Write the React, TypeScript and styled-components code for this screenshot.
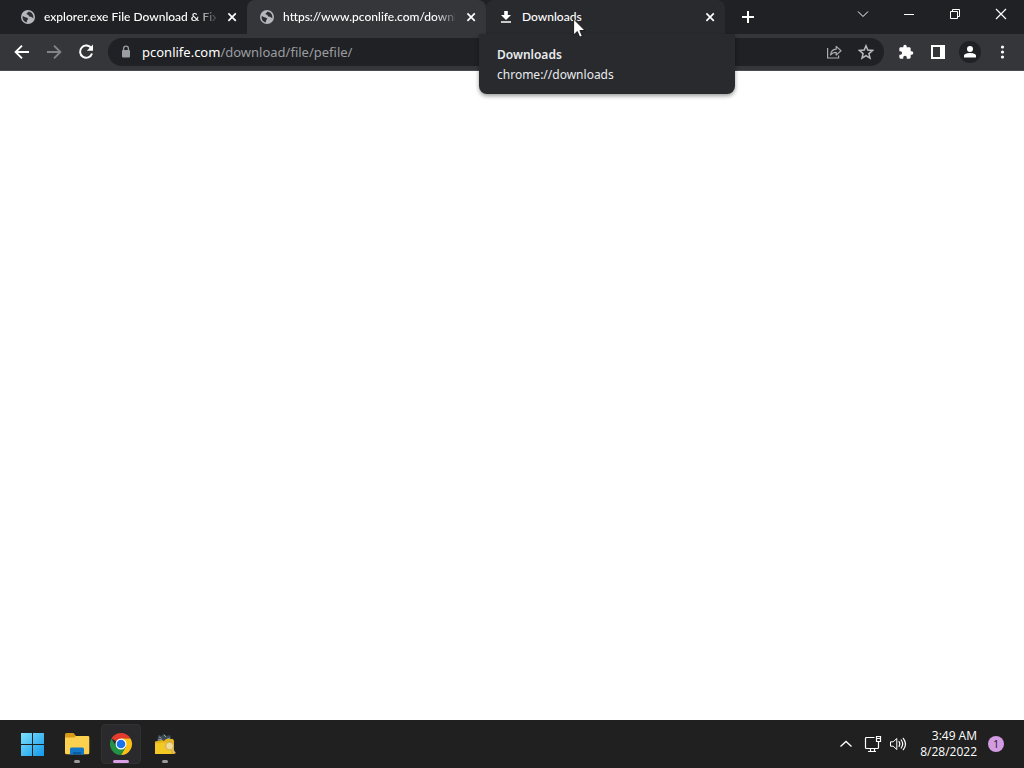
import React from "react";
import styled, { createGlobalStyle, css } from "styled-components";

const GlobalStyle = createGlobalStyle`
  * { box-sizing: border-box; }
  body {
    margin: 0;
    background: #ffffff;
    font-family: "Noto Sans", "Open Sans", sans-serif;
  }
`;

const Desktop = styled.div`
  display: flex;
  flex-direction: column;
  min-height: 100vh;
`;

const TabStrip = styled.header`
  display: flex;
  align-items: center;
  height: 34px;
  padding-left: 8px;
  background: #202124;
`;

const Tabs = styled.div`
  display: flex;
  flex: 0 1 717px;
  min-width: 0;
  height: 34px;
`;

type TabState = "idle" | "active" | "hover";

const tabFill = { idle: "#202124", active: "#35363a", hover: "#292a2d" };

const Tab = styled.div<{ $state: TabState }>`
  position: relative;
  display: flex;
  flex: 1 1 0;
  align-items: center;
  gap: 8px;
  min-width: 0;
  padding: 0 7px 0 12px;
  border-radius: 8px 8px 0 0;
  background: ${(p) => tabFill[p.$state]};
  color: #ffffff;
`;

const TabTitle = styled.span<{ $fade?: boolean }>`
  flex: 1;
  min-width: 0;
  overflow: hidden;
  font-family: Lato, "Open Sans", sans-serif;
  font-size: 12px;
  font-weight: 500;
  line-height: 18px;
  white-space: nowrap;
  ${(p) =>
    p.$fade &&
    css`
      mask-image: linear-gradient(to right, #000 calc(100% - 20px), rgba(0, 0, 0, 0.15));
    `}
`;

const IconButton = styled.button<{ $w: number; $h: number; $color?: string }>`
  display: flex;
  flex: none;
  align-items: center;
  justify-content: center;
  width: ${(p) => p.$w}px;
  height: ${(p) => p.$h}px;
  padding: 0;
  border: 0;
  background: transparent;
  color: ${(p) => p.$color ?? "#ffffff"};
`;

const NewTab = styled.div`
  padding-left: 14px;
`;

const WindowControls = styled.div`
  display: flex;
  align-self: flex-start;
  margin-left: auto;
`;

const Toolbar = styled.nav`
  display: flex;
  align-items: center;
  height: 37px;
  padding: 0 6px;
  border-bottom: 1px solid #4a4b4e;
  background: #35363a;
`;

const AddressBar = styled.form`
  display: flex;
  flex: 1;
  align-items: center;
  min-width: 0;
  height: 28px;
  margin: 0 6px;
  padding: 0 2px 0 10px;
  border-radius: 14px;
  background: #202124;
`;

const LockIcon = styled.svg`
  flex: none;
  color: #9a9da1;
`;

const Address = styled.a`
  flex: 1;
  min-width: 0;
  margin-left: 8px;
  overflow: hidden;
  color: #9a9da1;
  font-size: 13px;
  line-height: 20px;
  text-decoration: none;
  white-space: nowrap;
`;

const Host = styled.span`
  color: #ffffff;
`;

const Avatar = styled.span`
  display: flex;
  align-items: center;
  justify-content: center;
  width: 22px;
  height: 22px;
  border-radius: 50%;
  background: #202124;
`;

const HoverCard = styled.div`
  position: absolute;
  z-index: 1;
  top: 34px;
  left: -7px;
  width: 256px;
  padding: 11px 18px 9px;
  border-radius: 0 0 8px 8px;
  background: #292a2d;
  box-shadow: 0 2px 4px rgba(0, 0, 0, 0.4);
  color: #e8eaed;
  font-size: 12px;
  line-height: 20px;
`;

const CardTitle = styled.div`
  font-weight: 600;
`;

const Pointer = styled.svg`
  position: absolute;
  z-index: 2;
  top: 18px;
  left: 87px;
`;

const Page = styled.main`
  flex: 1;
  background: #ffffff;
`;

const Taskbar = styled.footer`
  display: flex;
  align-items: center;
  height: 48px;
  padding: 0 20px 0 13px;
  background: #202020;
`;

const Apps = styled.div`
  display: flex;
  gap: 4px;
`;

const AppButton = styled.button<{ $active?: boolean; $mark?: string }>`
  position: relative;
  display: flex;
  align-items: center;
  justify-content: center;
  width: 40px;
  height: 40px;
  padding: 0;
  border: 1px solid ${(p) => (p.$active ? "#313133" : "transparent")};
  border-radius: 4px;
  background: ${(p) => (p.$active ? "#2a2a2c" : "transparent")};

  &::after {
    content: "";
    position: absolute;
    bottom: 0;
    left: 50%;
    width: ${(p) => (p.$active ? 16 : 6)}px;
    height: 3px;
    border-radius: 2px;
    background: ${(p) => p.$mark ?? "transparent"};
    transform: translateX(-50%);
  }
`;

const Tray = styled.div`
  display: flex;
  align-items: center;
  margin-left: auto;
  color: #ffffff;
`;

const Clock = styled.time`
  margin: 0 11px 0 10px;
  font-family: "Open Sans", "Noto Sans", sans-serif;
  font-size: 12px;
  line-height: 16px;
  text-align: right;
`;

const Notice = styled.button`
  width: 16px;
  height: 16px;
  padding: 0;
  border: 0;
  border-radius: 50%;
  background: #d29be2;
  color: #202020;
  font-family: inherit;
  font-size: 10px;
  line-height: 16px;
`;

const Globe = () => (
  <svg width="16" height="16" viewBox="0 0 16 16">
    <circle cx="8" cy="8" r="7" fill="#b4b7bb" />
    <path
      d="M2.6 8.2c0-.5.1-.9.2-1.2l2.400 1.300c.8.4 1.500.2 2.300.6.9.4.8 1.300.2 1.700-.7.500-.4 1.100-.8 1.800-.2.500-.5.900-.7 1C4 12.600 2.600 10.500 2.600 8.200Z"
      fill="#2b2d30"
    />
    <path
      d="M8.600 2.500c-.3.900-1.100 1.200-1.700 1.700-.7.600-.2 1.300.5 1.400 1 .2 1.100.8 1.500 1.500.5.900 1.600.7 2.500.9.700.2 1 .9 1.900 1.200.500-2.600-.8-5.800-4.700-6.700Z"
      fill="#2b2d30"
    />
  </svg>
);

const Cross = () => (
  <svg width="16" height="16" viewBox="0 0 16 16">
    <path d="m4.4 4.4 7.4 7.4m0-7.4-7.4 7.4" stroke="currentColor" strokeWidth="1.7" />
  </svg>
);

const Arrow = ({ forward }: { forward?: boolean }) => (
  <svg width="20" height="20" viewBox="0 0 20 20">
    <path
      d={forward ? "M3 10h13M10 3.6l6.4 6.4-6.4 6.4" : "M17 10H4M10 3.6 3.6 10l6.4 6.4"}
      fill="none"
      stroke="currentColor"
      strokeWidth="1.9"
    />
  </svg>
);

const Volume = () => (
  <svg width="18" height="18" viewBox="0 0 18 18" fill="none" stroke="currentColor">
    <path d="M1.5 6.8h2.7l3.600-3.300v11l-3.600-3.300H1.500Z" strokeLinejoin="round" />
    <path
      d="M10 6.700q1.600 2.300 0 4.600M12.200 5q3 4 0 8M14.300 3.300q4.400 5.700 0 11.400"
      strokeLinecap="round"
      strokeWidth="1.200"
    />
  </svg>
);

const Chrome = () => (
  <svg width="24" height="24" viewBox="0 0 24 24">
    <path d="M12 12 2.47 6.5A11 11 0 0 1 21.53 6.5L12 7Z" fill="#e33b2e" />
    <path d="M12 6.500h9.530A11 11 0 0 1 12 23l4.760-8.250Z" fill="#fbc116" />
    <path d="M2.470 6.500A11 11 0 0 0 12 23l4.760-8.250L12 12l-4.760 2.750Z" fill="#229342" />
    <circle cx="12" cy="12" r="5.500" fill="#ffffff" />
    <circle cx="12" cy="12" r="4.300" fill="#1a73e8" />
  </svg>
);

export default function App() {
  return (
    <Desktop>
      <GlobalStyle />
      <TabStrip>
        <Tabs>
          <Tab $state="idle">
            <Globe />
            <TabTitle $fade>explorer.exe File Download &amp; Fix</TabTitle>
            <IconButton $w={16} $h={16} aria-label="Close tab"><Cross /></IconButton>
          </Tab>
          <Tab $state="active">
            <Globe />
            <TabTitle $fade>https://www.pconlife.com/downl</TabTitle>
            <IconButton $w={16} $h={16} aria-label="Close tab"><Cross /></IconButton>
          </Tab>
          <Tab $state="hover">
            <svg width="16" height="16" viewBox="0 0 16 16">
              <path d="M6.2 2h3.600v4H13l-5 5-5-5h3.200ZM3 12.200h10v1.600H3Z" fill="#ffffff" />
            </svg>
            <TabTitle>Downloads</TabTitle>
            <IconButton $w={16} $h={16} aria-label="Close tab"><Cross /></IconButton>
            <HoverCard role="tooltip">
              <CardTitle>Downloads</CardTitle>
              <div>chrome://downloads</div>
            </HoverCard>
            <Pointer width="13" height="21" viewBox="0 0 13 21">
              <path
                d="M.6 1v16l3.700-3.500 2.400 5.700 2.600-1.100-2.400-5.600H12Z"
                fill="#ffffff"
                stroke="#111111"
                strokeWidth=".9"
              />
            </Pointer>
          </Tab>
        </Tabs>
        <NewTab>
          <IconButton $w={18} $h={18} aria-label="New tab">
            <svg width="18" height="18" viewBox="0 0 18 18">
              <path d="M3 9h12M9 3v12" stroke="currentColor" strokeWidth="2" />
            </svg>
          </IconButton>
        </NewTab>
        <WindowControls>
          <IconButton $w={46} $h={28} aria-label="Search tabs">
            <svg width="12" height="12" viewBox="0 0 12 12">
              <path d="m1 3.500 5 5 5-5" fill="none" stroke="currentColor" />
            </svg>
          </IconButton>
          <IconButton $w={46} $h={28} aria-label="Minimize">
            <svg width="12" height="12" viewBox="0 0 12 12">
              <path d="M1 6.500h10" stroke="currentColor" />
            </svg>
          </IconButton>
          <IconButton $w={46} $h={28} aria-label="Restore">
            <svg width="12" height="12" viewBox="0 0 12 12">
              <path d="M1.500 3.500h7v7h-7ZM3.500 3.500v-2h7v7h-2" fill="none" stroke="currentColor" />
            </svg>
          </IconButton>
          <IconButton $w={46} $h={28} aria-label="Close">
            <svg width="12" height="12" viewBox="0 0 12 12">
              <path d="m1 1 10 10m0-10L1 11" stroke="currentColor" strokeWidth="1.200" />
            </svg>
          </IconButton>
        </WindowControls>
      </TabStrip>

      <Toolbar>
        <IconButton $w={32} $h={32} aria-label="Back"><Arrow /></IconButton>
        <IconButton $w={32} $h={32} $color="#838488" aria-label="Forward"><Arrow forward /></IconButton>
        <IconButton $w={32} $h={32} aria-label="Reload">
          <svg width="20" height="20" viewBox="0 0 20 20">
            <path d="M15.400 6.500A6.100 6.100 0 1 0 16 11.500" fill="none" stroke="currentColor" strokeWidth="2" />
            <path d="M17 2.600v6.200h-6.200Z" fill="currentColor" />
          </svg>
        </IconButton>
        <AddressBar>
          <LockIcon width="16" height="16" viewBox="0 0 16 16">
            <rect x="4" y="6" width="8" height="7.500" rx="1" fill="currentColor" />
            <path d="M5.600 6.500V4.600a2.400 2.400 0 0 1 4.800 0v1.900" fill="none" stroke="currentColor" strokeWidth="1.300" />
          </LockIcon>
          <Address href="#">
            <Host>pconlife.com</Host>/download/file/pefile/
          </Address>
          <IconButton type="button" $w={32} $h={28} $color="#a9acb0" aria-label="Share">
            <svg width="16" height="16" viewBox="0 0 16 16" fill="none" stroke="currentColor" strokeWidth="1.200">
              <path d="M1.600 4v10h11v-2.600" />
              <path d="M4.600 11c.3-4 2.400-5.700 5.600-5.800V2.400L15 6.800l-4.800 4.300V8.300C7.700 8.300 6 9 4.600 11Z" strokeLinejoin="round" />
            </svg>
          </IconButton>
          <IconButton type="button" $w={32} $h={28} $color="#b9bcc0" aria-label="Bookmark">
            <svg width="16" height="16" viewBox="0 0 16 16">
              <path
                d="m8 1.800 1.800 4.300 4.700.4-3.600 3.100 1.100 4.600L8 11.700l-4 2.500 1.100-4.600L1.500 6.500l4.700-.4Z"
                fill="none"
                stroke="currentColor"
                strokeWidth="1.500"
              />
            </svg>
          </IconButton>
        </AddressBar>
        <IconButton $w={32} $h={32} aria-label="Extensions">
          <svg width="16" height="16" viewBox="0 0 24 24">
            <path
              d="M20.500 11H19V7c0-1.100-.9-2-2-2h-4V3.500a2.500 2.500 0 0 0-5 0V5H4c-1.100 0-2 .9-2 2v3.800h1.500a2.700 2.700 0 0 1 0 5.400H2V20c0 1.100.9 2 2 2h3.800v-1.500a2.700 2.700 0 0 1 5.400 0V22H17c1.100 0 2-.9 2-2v-4h1.500a2.500 2.500 0 0 0 0-5Z"
              fill="currentColor"
            />
          </svg>
        </IconButton>
        <IconButton $w={32} $h={32} aria-label="Side panel">
          <svg width="16" height="16" viewBox="0 0 16 16">
            <path d="M1 1h14v14H1ZM3 3v10h7V3Z" fill="currentColor" fillRule="evenodd" />
          </svg>
        </IconButton>
        <IconButton $w={32} $h={32} aria-label="Profile">
          <Avatar>
            <svg width="16" height="16" viewBox="0 0 16 16" fill="currentColor">
              <circle cx="8" cy="5" r="3" />
              <path d="M2 13.500v-1.700C2 9.800 5.500 9 8 9s6 .8 6 2.800v1.700Z" />
            </svg>
          </Avatar>
        </IconButton>
        <IconButton $w={32} $h={32} aria-label="Menu">
          <svg width="16" height="16" viewBox="0 0 16 16" fill="currentColor">
            <circle cx="8.500" cy="3" r="1.600" />
            <circle cx="8.500" cy="8" r="1.600" />
            <circle cx="8.500" cy="13" r="1.600" />
          </svg>
        </IconButton>
      </Toolbar>

      <Page />

      <Taskbar>
        <Apps>
          <AppButton aria-label="Start">
            <svg width="24" height="24" viewBox="0 0 24 24">
              <defs>
                <linearGradient id="start" x1="0" y1="0" x2="24" y2="24" gradientUnits="userSpaceOnUse">
                  <stop offset="0" stopColor="#7fe3fb" />
                  <stop offset="1" stopColor="#1096ea" />
                </linearGradient>
              </defs>
              <path d="M0 1h11v11H0ZM12 1h11v11H12ZM0 13h11v11H0ZM12 13h11v11H12Z" fill="url(#start)" />
            </svg>
          </AppButton>
          <AppButton $mark="#9a9a9a" aria-label="File Explorer">
            <svg width="26" height="24" viewBox="0 0 26 24">
              <path d="M1 2.500Q1 1 2.500 1h7L12 4v5H1Z" fill="#d99a17" />
              <path d="M1 5.500h9L12 4h12q1.300 0 1.300 1.300v15.500q0 1.500-1.500 1.500H2.500Q1 22.300 1 20.800Z" fill="#fbd14f" />
              <path d="M6 22.500V17q0-1.500 1.500-1.500h11q1.500 0 1.500 1.500v5.500Z" fill="#1378c8" />
              <path d="M9 22.500V20h8v2.500Z" fill="#0b5ba5" />
            </svg>
          </AppButton>
          <AppButton $active $mark="#d9a0e6" aria-label="Google Chrome"><Chrome /></AppButton>
          <AppButton $mark="#9a9a9a" aria-label="File tool">
            <svg width="24" height="24" viewBox="0 0 24 24">
              <path d="M4 9 5.500 3 9 4l1.500-2.500L14 4l3-1 2 6Z" fill="#3c4951" />
              <path d="m6 5 2 1M11 3l2 2M5 8l4-1M14 7l3-1" stroke="#91a0a6" />
              <path d="M2 9.500 9 8l2 1 2-2h7l1 2v13H2Z" fill="#e5b51c" />
              <path d="M2 11.500 18 10v12H2Z" fill="#f3c926" />
              <circle cx="16.500" cy="14" r="4" fill="#eedb9a" stroke="#cda94a" />
              <path d="m19 17 3 4.500" stroke="#dfba68" strokeWidth="2" />
            </svg>
          </AppButton>
        </Apps>
        <Tray>
          <IconButton $w={28} $h={40} aria-label="Show hidden icons">
            <svg width="14" height="14" viewBox="0 0 14 14">
              <path d="m1.500 9.500 5.500-5 5.500 5" fill="none" stroke="currentColor" strokeWidth="1.300" />
            </svg>
          </IconButton>
          <IconButton $w={26} $h={40} aria-label="Network">
            <svg width="18" height="18" viewBox="0 0 18 18" fill="none" stroke="currentColor" strokeWidth="1.200">
              <path d="M10.500 2.500h-8q-1 0-1 1v9q0 1 1 1h11q1 0 1-1V7M4 16.500h8M6.500 13.500v3M10.500 13.500v3" />
              <path d="M12.500 1.500h4v5h-4ZM12.500 3.500h4" />
            </svg>
          </IconButton>
          <IconButton $w={24} $h={40} aria-label="Volume"><Volume /></IconButton>
          <Clock>
            <div>3:49 AM</div>
            <div>8/28/2022</div>
          </Clock>
          <Notice aria-label="1 notification">1</Notice>
        </Tray>
      </Taskbar>
    </Desktop>
  );
}
